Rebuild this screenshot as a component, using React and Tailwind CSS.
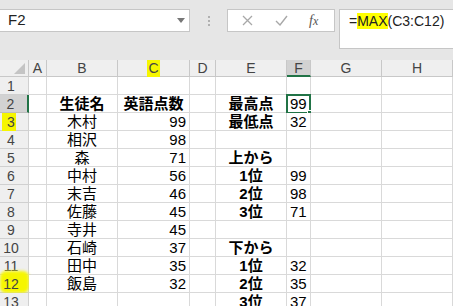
import React from "react";

const font = { fontFamily: '"Liberation Sans", "Noto Sans CJK JP", sans-serif' };

const letters = ["A", "B", "C", "D", "E", "F", "G", "H"];

// B: name, C: score, E: label, F: value
const rows = [
  { n: 1 },
  { n: 2, b: "生徒名", c: "英語点数", head: true, e: "最高点", f: "99", sel: true },
  { n: 3, b: "木村", c: "99", e: "最低点", f: "32", mark: "short" },
  { n: 4, b: "相沢", c: "98" },
  { n: 5, b: "森", c: "71", e: "上から" },
  { n: 6, b: "中村", c: "56", e: "1位", f: "99" },
  { n: 7, b: "末吉", c: "46", e: "2位", f: "98" },
  { n: 8, b: "佐藤", c: "45", e: "3位", f: "71" },
  { n: 9, b: "寺井", c: "45" },
  { n: 10, b: "石崎", c: "37", e: "下から" },
  { n: 11, b: "田中", c: "35", e: "1位", f: "32" },
  { n: 12, b: "飯島", c: "32", e: "2位", f: "35", mark: "long" },
  { n: 13, e: "3位", f: "37" },
];

function RowHead({ row }) {
  const selected = row.sel;
  return (
    <div
      className={`relative h-[18px] border-b border-r text-[14px] leading-[18px] text-[#444] ${
        selected
          ? "bg-[#d2d2d2] border-r-[#217346] border-r-2 border-b-[#bdbdbd]"
          : "bg-[#efefef] border-[#d0d0d0]"
      }`}
    >
      {row.mark === "short" && (
        <div className="absolute left-[2px] top-0 h-[18px] w-[14px] bg-[#f6f600] blur-[0.5px]" />
      )}
      {row.mark === "long" && (
        <div className="absolute left-0 -top-[4px] h-[22px] w-[29px] rounded-[6px] bg-[#f6f600] blur-[1.5px]" />
      )}
      <span className="relative block pr-[6px] text-center">{row.n}</span>
    </div>
  );
}

function Cell({ children, className = "" }) {
  return (
    <div
      className={`relative h-[18px] overflow-visible whitespace-nowrap border-b border-r border-[#d9d9d9] bg-white text-[15px] leading-[18px] text-black ${className}`}
    >
      {children}
    </div>
  );
}

function SheetRow({ row }) {
  return (
    <>
      <RowHead row={row} />
      <Cell />
      <Cell className={`text-center ${row.head ? "font-bold" : ""}`}>{row.b}</Cell>
      <Cell className={row.head ? "text-center font-bold" : "pr-[3px] text-right"}>{row.c}</Cell>
      <Cell />
      <Cell className="text-center font-bold">{row.e}</Cell>
      <Cell className="pl-[3px]">
        {row.f}
        {row.sel && (
          <div className="absolute -left-px -top-px h-[20px] w-[25px] border-2 border-[#217346]">
            <div className="absolute -bottom-[4px] -right-[4px] h-[6px] w-[6px] border border-white bg-[#217346]" />
          </div>
        )}
      </Cell>
      <Cell />
      <Cell />
    </>
  );
}

export default function App() {
  return (
    <div className="h-[306px] w-[453px] overflow-hidden bg-[#e6e6e6]" style={font}>
      {/* formula bar area */}
      <div className="flex h-[60px] items-start pt-[9px]">
        <div className="flex h-[23px] w-[190px] items-center justify-between border border-l-0 border-[#c6c6c6] bg-white pl-[8px] pr-[4px] text-[15px] text-[#222]">
          <span>F2</span>
          <svg width="8" height="5" viewBox="0 0 8 5">
            <polygon points="0,0 8,0 4,5" fill="#777" />
          </svg>
        </div>
        <div className="flex h-[23px] w-[37px] flex-col items-center justify-center gap-[2px]">
          <span className="h-[2px] w-[2px] bg-[#b0b0b0]" />
          <span className="h-[2px] w-[2px] bg-[#b0b0b0]" />
          <span className="h-[2px] w-[2px] bg-[#b0b0b0]" />
        </div>
        <div className="flex h-[23px] w-[108px] items-center border border-[#c6c6c6] bg-white text-[#9a9a9a]">
          <svg className="ml-[14px]" width="11" height="11" viewBox="0 0 11 11">
            <path d="M1 1 L10 10 M10 1 L1 10" stroke="#a8a8a8" strokeWidth="1.3" />
          </svg>
          <svg className="ml-[22px]" width="13" height="11" viewBox="0 0 13 11">
            <path d="M1 6 L5 10 L12 1" stroke="#a8a8a8" strokeWidth="1.4" fill="none" />
          </svg>
          <span
            className="ml-[21px] text-[14px] italic text-[#555]"
            style={{ fontFamily: '"Liberation Serif", serif' }}
          >
            f<span className="text-[12px]">x</span>
          </span>
        </div>
        <div className="ml-[4px] h-[40px] flex-1 border border-r-0 border-[#c6c6c6] bg-white pl-[9px] pt-[1px] text-[14px] leading-[20px] text-[#222]">
          =<span className="bg-[#ffff00]">MAX</span>(C3:C12)
        </div>
      </div>

      {/* sheet grid */}
      <div className="grid grid-cols-[29px_18px_71px_72px_26px_71px_24px_71px_71px]">
        <div className="relative h-[17px] border-b border-r border-[#c8c8c8] bg-[#efefef]">
          <svg className="absolute bottom-[2px] right-[3px]" width="11" height="11" viewBox="0 0 11 11">
            <polygon points="11,0 11,11 0,11" fill="#c4c4c4" />
          </svg>
        </div>
        {letters.map((l) =>
          l === "F" ? (
            <div
              key={l}
              className="h-[17px] border-b-2 border-r border-b-[#217346] border-r-[#c8c8c8] bg-[#d2d2d2] text-center text-[14px] leading-[16px] text-[#444]"
            >
              {l}
            </div>
          ) : (
            <div
              key={l}
              className="relative h-[17px] border-b border-r border-[#c8c8c8] bg-[#efefef] text-center text-[14px] leading-[16px] text-[#444]"
            >
              {l === "C" ? (
                <span className="inline-block h-[17px] w-[13px] bg-[#f6f600]">{l}</span>
              ) : (
                l
              )}
            </div>
          )
        )}
        {rows.map((r) => (
          <SheetRow key={r.n} row={r} />
        ))}
      </div>
    </div>
  );
}
